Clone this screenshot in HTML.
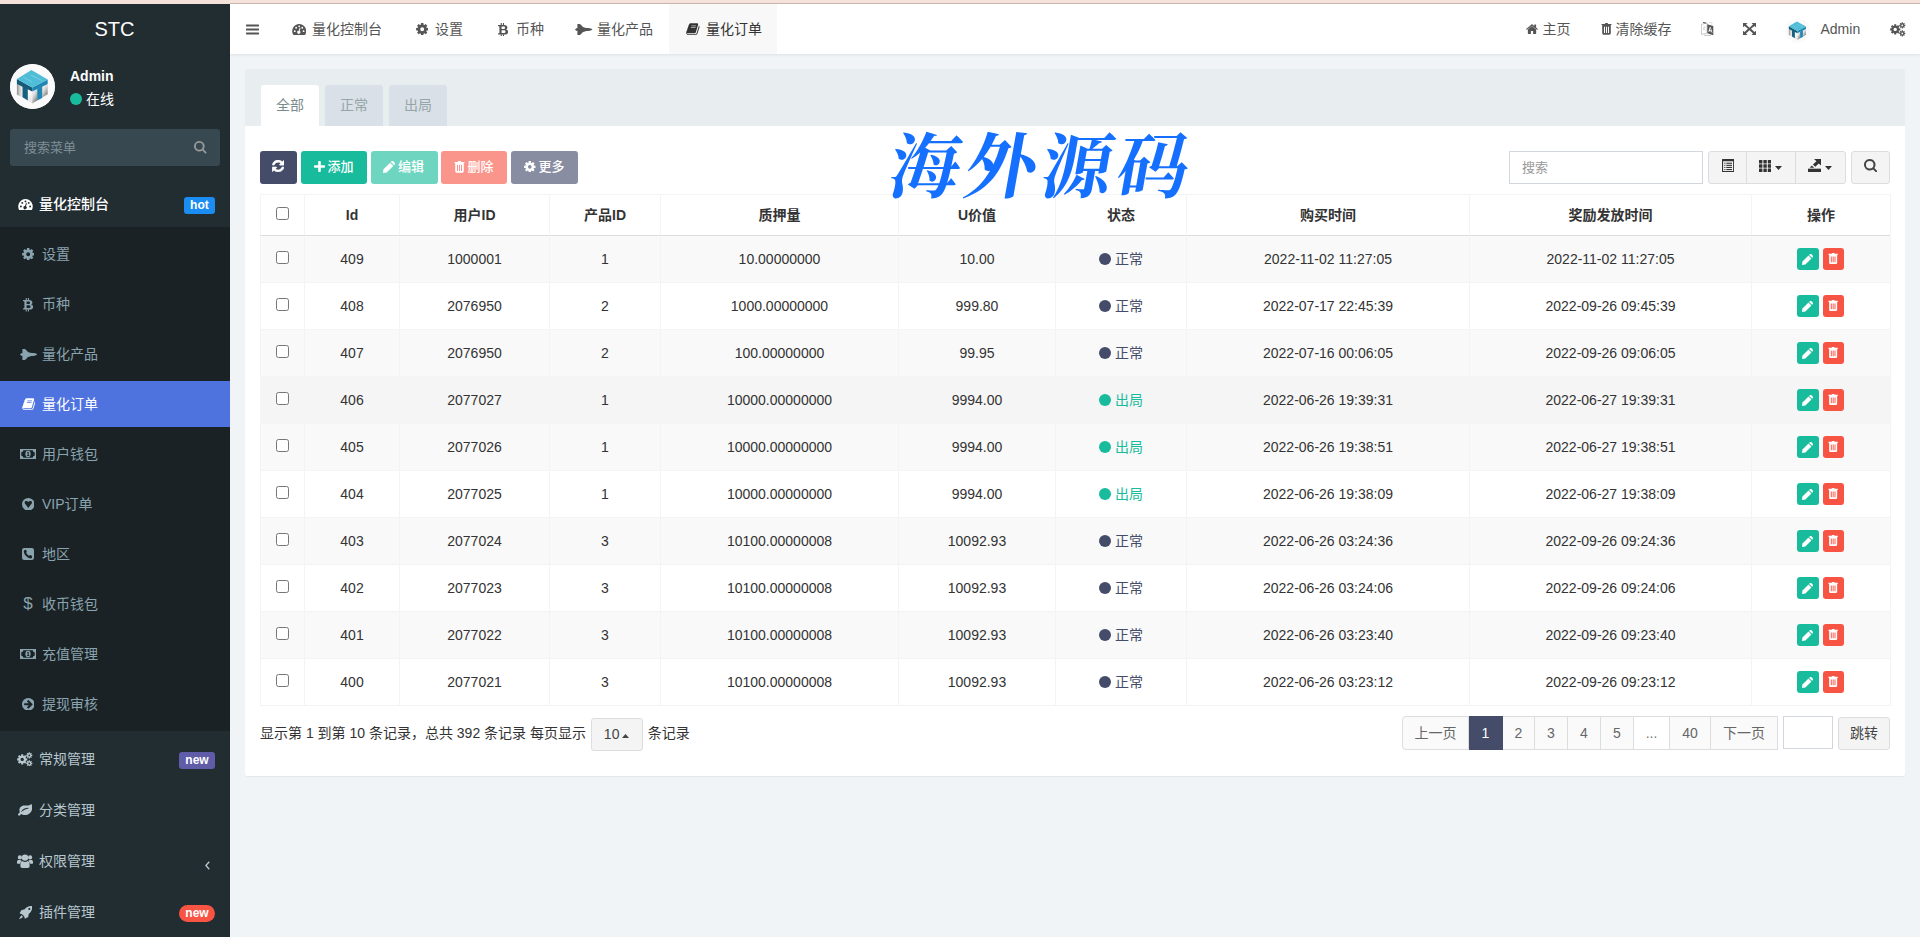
<!DOCTYPE html>
<html lang="zh-CN">
<head>
<meta charset="utf-8">
<title>STC</title>
<style>
*{box-sizing:border-box;}
html,body{margin:0;padding:0;}
body{width:1920px;height:937px;overflow:hidden;background:#f1f4f6;font-family:"Liberation Sans","Noto Sans CJK SC",sans-serif;font-size:14px;color:#444;position:relative;line-height:1.42857;}
svg{display:block;}
#strip{position:absolute;left:0;top:0;width:1920px;height:4px;background:#f5e2db;}
#strip i{position:absolute;left:230px;top:3px;width:1690px;height:1px;background:#cbb8b2;}
/* sidebar */
#side{position:absolute;left:0;top:4px;width:230px;height:933px;background:#222d32;}
#logo{position:absolute;left:0;top:0;width:229px;height:50px;line-height:50px;text-align:center;color:#fff;font-size:20px;}
#avatar{position:absolute;left:10px;top:60px;width:45px;height:45px;border-radius:50%;background:#fff;overflow:hidden;}
#uname{position:absolute;left:70px;top:62px;color:#fff;font-weight:bold;font-size:14px;line-height:20px;}
#ustat{position:absolute;left:70px;top:85px;color:#fff;font-size:14px;line-height:20px;white-space:nowrap;}
#ustat i{display:inline-block;width:12px;height:12px;border-radius:50%;background:#18bc9c;vertical-align:-1px;margin-right:4px;}
#msearch{position:absolute;left:10px;top:125px;width:210px;height:37px;border-radius:3px;background:#374850;color:#7f8e95;font-size:13px;line-height:37px;padding-left:14px;}
.m1{position:absolute;left:0;width:230px;height:46px;color:#b8c7ce;font-size:14px;line-height:46px;}
.m1 .t{position:absolute;left:39px;top:0;white-space:nowrap;}
.m1 svg{position:absolute;}
.m1.on{color:#fff;font-weight:500;}
.badge{position:absolute;right:15px;top:16px;height:17px;line-height:17px;padding:0 6.300px;border-radius:3px;color:#fff;font-size:12px;font-weight:bold;}
#sub{position:absolute;left:0;top:223px;width:230px;height:504px;background:#1a2226;}
.m2{position:absolute;left:0;width:230px;height:46px;color:#8aa4af;font-size:14px;line-height:46px;}
.m2 .t{position:absolute;left:42px;top:0;white-space:nowrap;}
.m2 svg{position:absolute;}
.m2 .dl{position:absolute;left:23.300px;top:0;font-size:17px;}
.m2.on{background:#4e73df;color:#fff;}
/* header */
#head{position:absolute;left:230px;top:4px;width:1690px;height:50px;background:#fff;box-shadow:0 1px 3px rgba(0,0,0,.08);}
.tab{position:absolute;top:0;height:50px;line-height:50px;color:#555;font-size:14px;white-space:nowrap;}
.tab svg{position:absolute;}
.tab .t{position:absolute;top:0;}
.tab.on{background:#f8f8f8;color:#333;}
.hr{position:absolute;top:0;height:50px;line-height:50px;color:#555;font-size:14px;white-space:nowrap;}
.hr svg{position:absolute;}
.hr .t{position:absolute;top:0;}
/* panel */
#panel{position:absolute;left:245px;top:69px;width:1660px;height:707px;background:#fff;border-radius:2px;box-shadow:0 1px 1px rgba(0,0,0,.05);}
#phead{position:absolute;left:0;top:0;width:1660px;height:57px;background:#e8edf0;border-radius:2px 2px 0 0;}
.ptab{position:absolute;top:16px;width:58px;height:41px;line-height:41px;text-align:center;font-size:14px;color:#95a5a6;background:#dae0e8;border-radius:3px 3px 0 0;}
.ptab.on{background:#fff;color:#7b8a8b;}
.btn{position:absolute;top:82px;height:33px;border-radius:3px;color:#fff;font-size:13px;line-height:33px;white-space:nowrap;}
.btn svg{position:absolute;}
.btn .t{position:absolute;top:-1px;font-weight:500;}
#wm{position:absolute;left:645px;top:54px;width:310px;height:90px;line-height:90px;font-family:"Liberation Serif","Noto Serif CJK SC",serif;font-weight:700;font-size:71px;color:#1570ff;white-space:nowrap;transform:skewX(-10deg);letter-spacing:5px;z-index:5;}
#sinput{position:absolute;left:1264px;top:82px;width:194px;height:33px;border:1px solid #d2d6de;background:#fff;color:#999;font-size:13px;line-height:31px;padding-left:12px;}
#bgrp{position:absolute;left:1463px;top:82px;width:138px;height:33px;}
.gb{position:absolute;top:0;height:33px;border:1px solid #ddd;background:#f4f4f4;color:#333;}
.gb:first-child{border-radius:3px 0 0 3px;}
.gb:last-child{border-radius:0 3px 3px 0;}
.gb svg{position:absolute;}
#sbtn{position:absolute;left:1606px;top:82px;width:39px;height:33px;border:1px solid #ddd;background:#f4f4f4;border-radius:3px;}
/* table */
#tb{position:absolute;left:15px;top:125px;width:1630px;table-layout:fixed;border-collapse:separate;border-spacing:0;font-size:14px;color:#333;border-right:1px solid #f4f4f4;}
#tb th,#tb td{text-align:center;padding:0;border-left:1px solid #f4f4f4;white-space:nowrap;overflow:hidden;}
#tb th{height:42px;border-top:1px solid #f4f4f4;border-bottom:1px solid #ddd;font-weight:bold;line-height:40px;}
#tb td{height:47px;border-bottom:1px solid #f4f4f4;line-height:46px;}
#tb tr.odd td{background:#f9f9f9;}
#tb tr.hov td{background:#f5f5f5;}
.cb{display:inline-block;width:13px;height:13px;border:1px solid #767676;border-radius:2.500px;background:#fff;vertical-align:middle;position:relative;top:-3px;}
.st i{display:inline-block;width:12px;height:12px;border-radius:50%;vertical-align:-1px;margin-right:4px;}
.s0{color:#444c69}.s0 i{background:#444c69}
.s1{color:#18bc9c}.s1 i{background:#18bc9c}
.ob{display:inline-block;width:22px;height:22px;border-radius:3px;vertical-align:middle;position:relative;top:-1px;left:-.7px;color:#fff;}
.ob.e{background:#18bc9c;margin-right:4px;}
.ob.d{background:#f75444;width:21px;}
/* footer */
#pinfo{position:absolute;left:15px;top:648px;height:33px;line-height:33px;font-size:14px;color:#333;white-space:nowrap;}
#psel{display:inline-block;position:relative;top:1px;width:52px;height:33px;border:1px solid #ddd;background:#f4f4f4;border-radius:3px;vertical-align:top;text-align:left;padding-left:12px;line-height:31px;color:#444;margin:0 1px;}
#pager{position:absolute;left:0;top:647px;width:1660px;height:34px;}
.pg{position:absolute;top:0;height:34px;border:1px solid #ddd;border-left:none;background:#fafafa;color:#666;font-size:14px;line-height:32px;text-align:center;}
.pg.first{border-left:1px solid #ddd;border-radius:4px 0 0 4px;}
.pg.last{border-radius:0 1px 1px 0;}
.pg.on{background:#444c69;border-color:#444c69;color:#fff;}
.pg.dis{background:#fff;color:#777;}
#jin{position:absolute;left:1538px;top:0;width:50px;height:33px;border:1px solid #d2d6de;background:#fff;}
#jbtn{position:absolute;left:1593px;top:1px;width:52px;height:33px;border:1px solid #ddd;background:#f4f4f4;border-radius:3px;color:#444;font-size:14px;line-height:31px;text-align:center;}

</style>
</head>
<body>
<div id="strip"><i></i></div>

<div id="side">
  <div id="logo">STC</div>
  <div id="avatar"><svg width="45" height="45" viewBox="0 0 45 45" fill="none" style=""><linearGradient id="ga1" x1="0" y1="0" x2="1" y2="0"><stop offset="0" stop-color="#8f8f8f"/><stop offset=".45" stop-color="#c9c9c9"/><stop offset="1" stop-color="#f4f4f4"/></linearGradient><linearGradient id="gb1" x1="0" y1="0" x2=".6" y2="1"><stop offset="0" stop-color="#ffffff"/><stop offset=".5" stop-color="#d8d8d8"/><stop offset="1" stop-color="#808080"/></linearGradient><linearGradient id="gc1" x1="0" y1="0" x2="0" y2="1"><stop offset="0" stop-color="#ffffff"/><stop offset="1" stop-color="#e2e2e2"/></linearGradient><circle cx="22.500" cy="22.500" r="22.500" fill="#fafafa"/><path d="M6.900 19.700 12.500 22.500V33.300L6.900 30.800Z" fill="url(#ga1)"/><path d="M17.800 25.300 22.200 27.200V39.400L17.800 36.400Z" fill="url(#gc1)"/><path d="M22.200 27.200 27.200 25V36.600L22.200 39.400Z" fill="url(#gb1)"/><path d="M32.200 22.200 37.700 19.700V30.300L32.200 33.600Z" fill="url(#gb1)"/><path d="M12.500 21.400 17.800 24.100V36.400L12.500 33.300Z" fill="#17607f"/><path d="M27.200 24.700 32.200 22.200V34.100L27.200 36.600Z" fill="#2186b4"/><path d="M6.900 15 22.200 23.600V27.400L6.900 19.900Z" fill="#165a78"/><path d="M22.200 23.600 37.700 15.500V19.900L22.200 27.400Z" fill="#1f86b3"/><path d="M21.400 6.100 37.700 15.500 22.200 23.600 6.900 15Z" fill="#4fbdd7"/><path d="M13.500 13 22.400 17.700 22 18.300 13.100 13.600Z M21.300 10.800 32.500 16.400 32.100 17 20.900 11.400Z" fill="#8fd9e0" opacity=".8"/></svg></div>
  <div id="uname">Admin</div>
  <div id="ustat"><i></i>在线</div>
  <div id="msearch">搜索菜单<svg width="12.5" height="12.5" viewBox="0 0 13 13" fill="currentColor" style="position:absolute;left:184px;top:12px;color:#999"><path fill-rule="evenodd" d="M5.500 0A5.500 5.500 0 0 1 10 8.700L12.700 11.400c.4.400.4 1 0 1.300-.4.400-1 .4-1.300 0L8.700 10A5.500 5.500 0 1 1 5.500 0Z M5.500 1.900A3.600 3.600 0 1 0 5.500 9.100A3.600 3.600 0 1 0 5.500 1.900Z"/></svg></div>
  <div class="m1 on" style="top:177px"><svg width="15" height="11.4" viewBox="0 0 15 11.4" fill="currentColor" style="left:17.5px;top:17.5px"><path fill-rule="evenodd" d="M7.5 0A7.5 7.5 0 0 0 1.1 11.0q.2.4.7.4h11.4q.5 0 .7-.4A7.5 7.5 0 0 0 7.5 0Z M1.95 7.5 a0.95 0.95 0 1 0 1.9 0 a0.95 0.95 0 1 0 -1.9 0Z M3.3499999999999996 3.9 a0.95 0.95 0 1 0 1.9 0 a0.95 0.95 0 1 0 -1.9 0Z M6.55 2.4 a0.95 0.95 0 1 0 1.9 0 a0.95 0.95 0 1 0 -1.9 0Z M9.75 3.9 a0.95 0.95 0 1 0 1.9 0 a0.95 0.95 0 1 0 -1.9 0Z M11.15 7.5 a0.95 0.95 0 1 0 1.9 0 a0.95 0.95 0 1 0 -1.9 0Z M7.0 7.0 L8.0 3.9 L8.9 4.2 L8.0 7.3 A1.6 1.6 0 1 1 7.0 7.0Z"/></svg><span class="t">量化控制台</span><span class="badge" style="background:#1a8cf2">hot</span></div>
  <div id="sub">
    <div class="m2" style="top:4px"><svg width="12.4" height="12.4" viewBox="0 0 12 12" fill="currentColor" style="left:21.6px;top:17px"><path fill-rule="evenodd" d="M10.31 4.71 L11.88 4.83 L11.88 7.17 L10.31 7.29 L9.96 8.14 L10.99 9.33 L9.33 10.99 L8.14 9.96 L7.29 10.31 L7.17 11.88 L4.83 11.88 L4.71 10.31 L3.86 9.96 L2.67 10.99 L1.01 9.33 L2.04 8.14 L1.69 7.29 L0.12 7.17 L0.12 4.83 L1.69 4.71 L2.04 3.86 L1.01 2.67 L2.67 1.01 L3.86 2.04 L4.71 1.69 L4.83 0.12 L7.17 0.12 L7.29 1.69 L8.14 2.04 L9.33 1.01 L10.99 2.67 L9.96 3.86Z M4.10 6.00 a1.9 1.9 0 1 0 3.8 0 a1.9 1.9 0 1 0 -3.8 0Z"/></svg><span class="t">设置</span></div>
    <div class="m2" style="top:54px"><svg width="10.3" height="13.5" viewBox="0 0 10.300 13.500" fill="currentColor" style="left:22.800px;top:17px"><path fill-rule="evenodd" d="M0 2h6.200c2 0 3.200.9 3.200 2.400 0 1-.5 1.700-1.400 2.100 1.300.3 2.100 1.200 2.100 2.400 0 1.700-1.300 2.600-3.500 2.600H0v-1.100l1.400-.3V3.400L0 3.100Z M3.600 3.400v2.600h1.900c1 0 1.500-.450 1.500-1.300s-.5-1.300-1.500-1.300Z M3.600 7.300v2.800h2.200c1.100 0 1.700-.5 1.700-1.400s-.6-1.400-1.700-1.400Z"/><rect x="2.700" y="0" width="1.100" height="2.300"/><rect x="4.900" y="0" width="1.100" height="2.300"/><rect x="2.700" y="11.200" width="1.100" height="2.300"/><rect x="4.900" y="11.200" width="1.100" height="2.300"/></svg><span class="t">币种</span></div>
    <div class="m2" style="top:104px"><svg width="17.5" height="11" viewBox="0 0 17.500 11" fill="currentColor" style="left:19.500px;top:18px"><path d="M0 5.500 1.200 4.300H2.400V.300C2.400.1 2.600 0 2.800 0H4.600C5 0 5.300.2 5.600.5L8 3C9.500 3.700 11 4 13.500 4.100 15 4.200 16.500 4.700 17.500 5.500 16.500 6.300 15 6.800 13.500 6.900 11 7 9.500 7.300 8 8L5.600 10.500C5.300 10.800 5 11 4.600 11H2.800C2.600 11 2.400 10.900 2.400 10.700V6.700H1.200Z"/></svg><span class="t">量化产品</span></div>
    <div class="m2 on" style="top:154px"><svg width="13.5" height="12" viewBox="0 0 13.5 12" fill="currentColor" style="left:21.5px;top:17px"><path d="M13.3 2.900c.3.400.3.900.2 1.400L11.400 10.700c-.2.700-.9 1.200-1.600 1.200H2.300c-.8 0-1.700-.6-2-1.500-.1-.4-.1-.700 0-1 0-.2.100-.4.100-.6 0-.15-.1-.25-.05-.4.050-.25.300-.450.450-.750.300-.5.600-1.300.650-1.800 0-.2-.1-.35 0-.5.050-.2.300-.4.400-.650C2.100 4.100 2.400 3.200 2.500 2.700c0-.2-.1-.4 0-.5.100-.250.350-.350.500-.550C3.300 1.200 3.700.2 4.400.300l0 0c.2-.050.350-.050.550-.050H11c.4 0 .750.150.950.450.200.250.250.600.150 1L10 8.700c-.4 1.200-.6 1.500-1.600 1.500H1.500c-.1 0-.25.050-.3.100-.050.1-.050.2 0 .4.200.5.700.6 1.100.6H9.700c.3 0 .6-.2.700-.450L12.800 3.200c.050-.150.050-.3.050-.450.200.050.350.1.450.150Z"/><path d="M5.300 3.300h4.600l.25-.8H5.550Z M4.800 5h4.600l.25-.8H5.050Z" fill="#4e73df"/></svg><span class="t">量化订单</span></div>
    <div class="m2" style="top:204px"><svg width="16" height="10" viewBox="0 0 16 10" fill="currentColor" style="left:20px;top:17.800px"><path fill-rule="evenodd" d="M0 0H16V10H0Z M3.300 1.300H12.700A2.100 2.100 0 0 0 14.700 3.300V6.700A2.100 2.100 0 0 0 12.700 8.700H3.300A2.100 2.100 0 0 0 1.300 6.700V3.300A2.100 2.100 0 0 0 3.300 1.300Z"/><path fill-rule="evenodd" d="M5.400 5a2.600 3.200 0 1 0 5.200 0a2.600 3.200 0 1 0-5.200 0Z M7 3.600 7.900 2.900h.8v3.400h.8v.8H6.800v-.8h.9V4.100l-.6.400Z"/></svg><span class="t">用户钱包</span></div>
    <div class="m2" style="top:254px"><svg width="12.6" height="12.6" viewBox="0 0 12.600 12.600" fill="currentColor" style="left:21.7px;top:16.7px"><path fill-rule="evenodd" d="M6.300 0a6.300 6.300 0 1 0 0 12.600a6.300 6.300 0 1 0 0-12.600Z M6.300 10 2.900 5.400c-.8-1.200.1-2.500 1.300-2.500.9 0 1.600.6 2.100 1.100.5-.5 1.200-1.100 2.100-1.100 1.200 0 2.100 1.300 1.300 2.500Z"/></svg><span class="t">VIP订单</span></div>
    <div class="m2" style="top:304px"><svg width="12" height="12" viewBox="0 0 12 12" fill="currentColor" style="left:22px;top:17px"><path fill-rule="evenodd" d="M2.200 0H9.800A2.200 2.200 0 0 1 12 2.200V9.800A2.200 2.200 0 0 1 9.800 12H2.200A2.200 2.200 0 0 1 0 9.800V2.200A2.200 2.200 0 0 1 2.200 0Z M10 8.300c0-.1 0-.2-.050-.3-.050-.150-1.300-.8-1.500-.9-.150-.1-.3-.2-.450-.2-.3 0-.7.8-1 .8-.150 0-.3-.1-.450-.2C5.700 7 4.900 6.200 4.400 5.300c-.1-.150-.2-.3-.2-.450 0-.3.8-.7.8-1 0-.150-.1-.3-.2-.450-.1-.2-.750-1.450-.9-1.500C3.800 1.850 3.700 1.850 3.600 1.850c-.3 0-.9.150-1.200.3-.4.200-.65.900-.65 1.350 0 .6.250 1.150.450 1.700.700 1.950 2.800 4.050 4.750 4.750.550.200 1.100.450 1.700.450.450 0 1.150-.250 1.350-.650C10.150 9.450 10 8.600 10 8.300Z"/></svg><span class="t">地区</span></div>
    <div class="m2" style="top:354px"><span class="dl">$</span><span class="t">收币钱包</span></div>
    <div class="m2" style="top:404px"><svg width="16" height="10" viewBox="0 0 16 10" fill="currentColor" style="left:20px;top:17.800px"><path fill-rule="evenodd" d="M0 0H16V10H0Z M3.300 1.300H12.700A2.100 2.100 0 0 0 14.700 3.300V6.700A2.100 2.100 0 0 0 12.700 8.700H3.300A2.100 2.100 0 0 0 1.300 6.700V3.300A2.100 2.100 0 0 0 3.300 1.300Z"/><path fill-rule="evenodd" d="M5.400 5a2.600 3.200 0 1 0 5.200 0a2.600 3.200 0 1 0-5.200 0Z M7 3.600 7.900 2.900h.8v3.400h.8v.8H6.800v-.8h.9V4.100l-.6.400Z"/></svg><span class="t">充值管理</span></div>
    <div class="m2" style="top:454px"><svg width="12.6" height="12.6" viewBox="0 0 12.600 12.600" fill="currentColor" style="left:21.7px;top:16.7px"><path fill-rule="evenodd" d="M6.300 0a6.300 6.300 0 1 0 0 12.600a6.300 6.300 0 1 0 0-12.600Z M10.600 6.300c0 .15-.05.3-.15.4L6.700 10.400c-.2.200-.5.200-.750 0l-.75-.750c-.2-.2-.2-.5 0-.750L6.800 7.300H2.600c-.3 0-.5-.25-.5-.5v-1c0-.3.250-.5.5-.5H6.800L5.200 3.700c-.2-.2-.2-.5 0-.750l.75-.750c.2-.2.5-.2.750 0L10.450 5.900c.1.100.15.250.15.400Z"/></svg><span class="t">提现审核</span></div>
  </div>
  <div class="m1" style="top:732px"><svg width="15.5" height="14.6" viewBox="0 0 15.5 14.6" fill="currentColor" style="left:17px;top:15.600px"><path fill-rule="evenodd" d="M8.94 6.28 L10.30 6.39 L10.30 8.41 L8.94 8.52 L8.63 9.25 L9.52 10.29 L8.09 11.72 L7.05 10.83 L6.32 11.14 L6.21 12.50 L4.19 12.50 L4.08 11.14 L3.35 10.83 L2.31 11.72 L0.88 10.29 L1.77 9.25 L1.46 8.52 L0.10 8.41 L0.10 6.39 L1.46 6.28 L1.77 5.55 L0.88 4.51 L2.31 3.08 L3.35 3.97 L4.08 3.66 L4.19 2.30 L6.21 2.30 L6.32 3.66 L7.05 3.97 L8.09 3.08 L9.52 4.51 L8.63 5.55Z M3.50 7.40 a1.7 1.7 0 1 0 3.4 0 a1.7 1.7 0 1 0 -3.4 0Z M14.41 2.77 L15.34 2.80 L15.34 4.00 L14.41 4.03 L14.24 4.44 L14.88 5.12 L14.02 5.98 L13.34 5.34 L12.93 5.51 L12.90 6.44 L11.70 6.44 L11.67 5.51 L11.26 5.34 L10.58 5.98 L9.72 5.12 L10.36 4.44 L10.19 4.03 L9.26 4.00 L9.26 2.80 L10.19 2.77 L10.36 2.36 L9.72 1.68 L10.58 0.82 L11.26 1.46 L11.67 1.29 L11.70 0.36 L12.90 0.36 L12.93 1.29 L13.34 1.46 L14.02 0.82 L14.88 1.68 L14.24 2.36Z M11.40 3.40 a0.9 0.9 0 1 0 1.8 0 a0.9 0.9 0 1 0 -1.8 0Z M14.41 10.77 L15.34 10.80 L15.34 12.00 L14.41 12.03 L14.24 12.44 L14.88 13.12 L14.02 13.98 L13.34 13.34 L12.93 13.51 L12.90 14.44 L11.70 14.44 L11.67 13.51 L11.26 13.34 L10.58 13.98 L9.72 13.12 L10.36 12.44 L10.19 12.03 L9.26 12.00 L9.26 10.80 L10.19 10.77 L10.36 10.36 L9.72 9.68 L10.58 8.82 L11.26 9.46 L11.67 9.29 L11.70 8.36 L12.90 8.36 L12.93 9.29 L13.34 9.46 L14.02 8.82 L14.88 9.68 L14.24 10.36Z M11.40 11.40 a0.9 0.9 0 1 0 1.8 0 a0.9 0.9 0 1 0 -1.8 0Z"/></svg><span class="t">常规管理</span><span class="badge" style="background:#605ca8">new</span></div>
  <div class="m1" style="top:783px"><svg width="15.3" height="11.7" viewBox="0 0 15.300 11.700" fill="currentColor" style="left:17px;top:17px"><path fill-rule="evenodd" d="M14.500 0c.5 1.200.7 2.500.7 3.700 0 4.300-3.300 7.300-7.400 7.300-1.400 0-2.500-.5-3.600-1.100-.6.500-1.300 1.800-2.100 1.800-.7 0-1.100-.6-1.100-1.100 0-.9 1.400-1.800 1.900-2.400C2.600 7.600 2.400 6.900 2.400 6.100c0-3 2.500-4.500 5.100-4.600 1.700-.1 4.900.2 6.100-1 .3-.3.500-.5.900-.5Z M11 3.700c-2 0-5.200.9-6.900 3.700-.15.250.1.550.4.400C6.500 6.200 8.800 4.800 11 4.700c.3 0 .5-.2.500-.5s-.2-.5-.5-.5Z"/></svg><span class="t">分类管理</span></div>
  <div class="m1" style="top:834px"><svg width="16" height="14" viewBox="0 0 16 14" fill="currentColor" style="left:17.200px;top:15.500px"><circle cx="2.900" cy="3.400" r="2.100"/><circle cx="13.100" cy="3.400" r="2.100"/><path d="M4.700 6.700C4 6.100 3.500 5.900 2.800 5.900H1.600C.5 5.900 0 6.700 0 8V9.300c0 .3.200.5.500.5H3.100C3.200 8.600 3.800 7.500 4.700 6.700Z"/><path d="M11.300 6.700C12 6.100 12.500 5.900 13.200 5.900h1.200C15.500 5.900 16 6.700 16 8V9.300c0 .3-.2.500-.5.500H12.900C12.800 8.600 12.200 7.500 11.300 6.700Z"/><circle cx="8" cy="3.600" r="3.200"/><path d="M10.700 7c-.7.600-1.700 1-2.700 1S6 7.600 5.300 7C3.900 7.300 3.400 8.800 3.400 10.500v1.800c0 1 .8 1.700 1.800 1.700h5.600c1 0 1.800-.7 1.800-1.700V10.500c0-1.700-.5-3.200-1.900-3.500Z"/></svg><span class="t">权限管理</span><svg width="5" height="9" viewBox="0 0 5 9" fill="currentColor" style="left:205px;top:23px"><path d="M4.200.7.900 4.500 4.200 8.300" fill="none" stroke="currentColor" stroke-width="1.300"/></svg></div>
  <div class="m1" style="top:885px"><svg width="13.4" height="13.4" viewBox="0 0 13.400 13.400" fill="currentColor" style="left:18.800px;top:16.500px"><path fill-rule="evenodd" d="M13 0c.2 0 .3.100.3.300.1 3.300-1 5.700-3.600 7.600-.1.900-.250 1.900-.4 2.800 0 .1-.1.200-.2.250L6.400 12.600c-.2.100-.4 0-.5-.2L5.100 10.300 3 8.200.900 7.400c-.2-.1-.3-.3-.2-.5L2.350 4.200c.050-.1.150-.2.250-.2.900-.150 1.900-.3 2.800-.4C7.300 1 9.700-.1 13 0Z M10.300 1.900a1.100 1.100 0 1 0 0 2.200a1.100 1.100 0 1 0 0-2.200Z "/><path d="M2.400 9.200c.5.500 1.100 1.100 1.700 1.700-.9.900-2.400 1.700-4.100 2.400C.7 11.600 1.500 10.100 2.400 9.200Z"/></svg><span class="t">插件管理</span><span class="badge" style="background:#f75444;border-radius:9px">new</span></div>
</div>


<div id="head">
  <svg width="13" height="11" viewBox="0 0 13 11" fill="currentColor" style="position:absolute;left:16px;top:19.5px;color:#555"><rect x="0" y="0.5" width="13" height="2" rx=".4"/><rect x="0" y="4.5" width="13" height="2" rx=".4"/><rect x="0" y="8.5" width="13" height="2" rx=".4"/></svg>
  <div class="tab" style="left:45px;width:122px"><svg width="14.4" height="10.94" viewBox="0 0 15 11.4" fill="currentColor" style="left:16.600px;top:20px"><path fill-rule="evenodd" d="M7.5 0A7.5 7.5 0 0 0 1.1 11.0q.2.4.7.4h11.4q.5 0 .7-.4A7.5 7.5 0 0 0 7.5 0Z M1.95 7.5 a0.95 0.95 0 1 0 1.9 0 a0.95 0.95 0 1 0 -1.9 0Z M3.3499999999999996 3.9 a0.95 0.95 0 1 0 1.9 0 a0.95 0.95 0 1 0 -1.9 0Z M6.55 2.4 a0.95 0.95 0 1 0 1.9 0 a0.95 0.95 0 1 0 -1.9 0Z M9.75 3.9 a0.95 0.95 0 1 0 1.9 0 a0.95 0.95 0 1 0 -1.9 0Z M11.15 7.5 a0.95 0.95 0 1 0 1.9 0 a0.95 0.95 0 1 0 -1.9 0Z M7.0 7.0 L8.0 3.9 L8.9 4.2 L8.0 7.3 A1.6 1.6 0 1 1 7.0 7.0Z"/></svg><span class="t" style="left:37px">量化控制台</span></div>
  <div class="tab" style="left:168px;width:80px"><svg width="12.4" height="12.4" viewBox="0 0 12 12" fill="currentColor" style="left:17.6px;top:19px"><path fill-rule="evenodd" d="M10.31 4.71 L11.88 4.83 L11.88 7.17 L10.31 7.29 L9.96 8.14 L10.99 9.33 L9.33 10.99 L8.14 9.96 L7.29 10.31 L7.17 11.88 L4.83 11.88 L4.71 10.31 L3.86 9.96 L2.67 10.99 L1.01 9.33 L2.04 8.14 L1.69 7.29 L0.12 7.17 L0.12 4.83 L1.69 4.71 L2.04 3.86 L1.01 2.67 L2.67 1.01 L3.86 2.04 L4.71 1.69 L4.83 0.12 L7.17 0.12 L7.29 1.69 L8.14 2.04 L9.33 1.01 L10.99 2.67 L9.96 3.86Z M4.10 6.00 a1.9 1.9 0 1 0 3.8 0 a1.9 1.9 0 1 0 -3.8 0Z"/></svg><span class="t" style="left:37px">设置</span></div>
  <div class="tab" style="left:249px;width:80px"><svg width="10.3" height="13.5" viewBox="0 0 10.300 13.500" fill="currentColor" style="left:19px;top:18.500px"><path fill-rule="evenodd" d="M0 2h6.200c2 0 3.200.9 3.200 2.400 0 1-.5 1.700-1.400 2.100 1.300.3 2.100 1.200 2.100 2.400 0 1.700-1.300 2.600-3.500 2.600H0v-1.100l1.400-.3V3.400L0 3.100Z M3.600 3.400v2.600h1.900c1 0 1.500-.450 1.500-1.300s-.5-1.300-1.500-1.300Z M3.600 7.300v2.800h2.200c1.100 0 1.700-.5 1.700-1.400s-.6-1.400-1.700-1.400Z"/><rect x="2.700" y="0" width="1.100" height="2.300"/><rect x="4.900" y="0" width="1.100" height="2.300"/><rect x="2.700" y="11.200" width="1.100" height="2.300"/><rect x="4.900" y="11.200" width="1.100" height="2.300"/></svg><span class="t" style="left:37px">币种</span></div>
  <div class="tab" style="left:330px;width:108px"><svg width="17.5" height="11" viewBox="0 0 17.500 11" fill="currentColor" style="left:15px;top:20px"><path d="M0 5.500 1.200 4.300H2.400V.300C2.400.1 2.600 0 2.800 0H4.600C5 0 5.300.2 5.600.5L8 3C9.500 3.700 11 4 13.500 4.100 15 4.200 16.500 4.700 17.500 5.500 16.500 6.300 15 6.800 13.500 6.900 11 7 9.500 7.300 8 8L5.600 10.500C5.300 10.800 5 11 4.600 11H2.800C2.600 11 2.400 10.900 2.400 10.700V6.700H1.200Z"/></svg><span class="t" style="left:37px">量化产品</span></div>
  <div class="tab on" style="left:439px;width:108px"><svg width="13.5" height="12" viewBox="0 0 13.5 12" fill="currentColor" style="left:17px;top:19px"><path d="M13.3 2.900c.3.400.3.900.2 1.400L11.400 10.700c-.2.700-.9 1.200-1.600 1.200H2.300c-.8 0-1.700-.6-2-1.500-.1-.4-.1-.700 0-1 0-.2.100-.4.100-.6 0-.15-.1-.25-.05-.4.050-.25.300-.450.450-.750.300-.5.600-1.300.650-1.800 0-.2-.1-.35 0-.5.050-.2.300-.4.400-.650C2.100 4.100 2.400 3.200 2.500 2.700c0-.2-.1-.4 0-.5.100-.250.350-.350.500-.550C3.300 1.200 3.700.2 4.400.300l0 0c.2-.050.350-.050.550-.050H11c.4 0 .750.150.950.450.200.250.250.600.150 1L10 8.700c-.4 1.200-.6 1.500-1.600 1.500H1.500c-.1 0-.25.050-.3.100-.050.1-.050.2 0 .4.200.5.700.6 1.100.6H9.700c.3 0 .6-.2.700-.450L12.800 3.200c.050-.150.050-.3.050-.450.200.050.350.1.450.150Z"/><path d="M5.300 3.300h4.600l.25-.8H5.550Z M4.800 5h4.600l.25-.8H5.050Z" fill="#c8c8c8"/></svg><span class="t" style="left:37px">量化订单</span></div>
  <div class="hr" style="left:1296px"><svg width="12" height="10.15" viewBox="0 0 13 11" fill="currentColor" style="left:0;top:19.500px"><path d="M6.500 2.300 11 6v4.300c0 .3-.2.500-.5.500H7.700V7.700H5.300v3.100H2.500c-.3 0-.5-.2-.5-.5V6Z"/><path d="M12.800 5.700 12.300 6.300c-.1.100-.3.100-.4 0L6.500 1.800 1.100 6.300c-.1.100-.3.100-.4 0L.2 5.700c-.1-.1-.1-.3 0-.4L5.900.500c.3-.3.900-.3 1.200 0L9 2.100V.800c0-.150.1-.250.250-.250H10.700c.150 0 .250.1.250.250v2.900L12.800 5.300c.1.100.1.300 0 .4Z"/></svg><span class="t" style="left:16.500px">主页</span></div>
  <div class="hr" style="left:1371px"><svg width="11" height="12" viewBox="0 0 11 12" fill="currentColor" style="left:-.5px;top:18.800px"><path fill-rule="evenodd" d="M3.800 0.900 4.200.2C4.300.1 4.400 0 4.600 0H6.400c.2 0 .3.100.4.200l.4.700H10.200c.150 0 .3.100.3.300v.6c0 .2-.150.300-.3.300H9.800v8c0 1-.6 1.700-1.300 1.700H2.500c-.7 0-1.300-.7-1.300-1.700v-8H.8c-.150 0-.3-.1-.3-.300V1.200c0-.2.150-.300.3-.3Z M3 4v5.800c0 .150.1.250.250.250h.5c.150 0 .250-.1.250-.250V4c0-.150-.1-.250-.250-.250h-.5C3.100 3.750 3 3.850 3 4Z M5 4v5.800c0 .150.1.250.250.250h.5c.150 0 .250-.1.250-.250V4c0-.150-.1-.250-.250-.250h-.5C5.100 3.750 5 3.850 5 4Z M7 4v5.800c0 .150.1.250.250.250h.5C7.900 10.050 8 9.950 8 9.800V4c0-.150-.1-.250-.250-.250h-.5C7.100 3.750 7 3.850 7 4Z"/></svg><span class="t" style="left:14.500px">清除缓存</span></div>
  <div class="hr" style="left:1471px"><svg width="13" height="14" viewBox="0 0 13 14" fill="currentColor" style="left:0;top:18px"><path d="M.4 2.400 6 .8v10.500L.4 12.500Z" fill="none" stroke="#bbb" stroke-width=".8"/><path d="M2.200 5.300c.8.300 1.600.3 2.400-.2M3.400 4.200v1.200c-.2 1.300-.7 2.100-1.400 2.700M2.600 6.600c.5.700 1.200 1.300 2 1.600" fill="none" stroke="#ccc" stroke-width=".7"/><path d="M2 .3 5 1.300" stroke="#555" stroke-width="1.2"/><path fill-rule="evenodd" fill="#555" d="M6.300 2.300 12.300 3.900V13.200L6.300 11.300Z M8.800 4.900 7.400 9.700l.9.300.3-1.100 1.700.5.300 1.100.9.300L9.700 5.200Z M8.850 8l.6-2 .6 2.400Z"/><path d="M3.200 13.400H9.700L10.300 12.300" fill="none" stroke="#999" stroke-width=".6"/><path d="M8 .6 10.900.3V3.300" fill="none" stroke="#ccc" stroke-width=".6"/></svg></div>
  <div class="hr" style="left:1513px"><svg width="13" height="12" viewBox="0 0 13 12.500" preserveAspectRatio="none" fill="currentColor" style="left:0;top:19px"><path transform="scale(1 1)" d="M0 0H4.500L3 1.500 6.500 5 10 1.500 8.500 0H13V4.500L11.500 3 8 6 11.500 9.500 13 8v4.500H8.500L10 11 6.500 7.500 3 11 4.500 12.500H0V8L1.500 9.500 5 6 1.500 3 0 4.500Z"/></svg></div>
  <div class="hr" style="left:1555px"><span style="position:absolute;left:0;top:13.500px;width:25px;height:25px;border-radius:50%;overflow:hidden"><svg width="25" height="25" viewBox="0 0 45 45" fill="none" style=""><linearGradient id="ga2" x1="0" y1="0" x2="1" y2="0"><stop offset="0" stop-color="#8f8f8f"/><stop offset=".45" stop-color="#c9c9c9"/><stop offset="1" stop-color="#f4f4f4"/></linearGradient><linearGradient id="gb2" x1="0" y1="0" x2=".6" y2="1"><stop offset="0" stop-color="#ffffff"/><stop offset=".5" stop-color="#d8d8d8"/><stop offset="1" stop-color="#808080"/></linearGradient><linearGradient id="gc2" x1="0" y1="0" x2="0" y2="1"><stop offset="0" stop-color="#ffffff"/><stop offset="1" stop-color="#e2e2e2"/></linearGradient><circle cx="22.500" cy="22.500" r="22.500" fill="#fafafa"/><path d="M6.900 19.700 12.500 22.500V33.300L6.900 30.800Z" fill="url(#ga2)"/><path d="M17.800 25.300 22.200 27.200V39.400L17.800 36.400Z" fill="url(#gc2)"/><path d="M22.200 27.200 27.200 25V36.600L22.200 39.400Z" fill="url(#gb2)"/><path d="M32.200 22.200 37.700 19.700V30.300L32.200 33.600Z" fill="url(#gb2)"/><path d="M12.500 21.400 17.800 24.100V36.400L12.500 33.300Z" fill="#17607f"/><path d="M27.200 24.700 32.200 22.200V34.100L27.200 36.600Z" fill="#2186b4"/><path d="M6.900 15 22.200 23.600V27.400L6.900 19.900Z" fill="#165a78"/><path d="M22.200 23.600 37.700 15.500V19.900L22.200 27.400Z" fill="#1f86b3"/><path d="M21.400 6.100 37.700 15.500 22.200 23.600 6.900 15Z" fill="#4fbdd7"/><path d="M13.500 13 22.400 17.700 22 18.300 13.100 13.600Z M21.300 10.800 32.500 16.400 32.100 17 20.900 11.400Z" fill="#8fd9e0" opacity=".8"/></svg></span><span class="t" style="left:35.500px">Admin</span></div>
  <div class="hr" style="left:1660px"><svg width="15.5" height="14.6" viewBox="0 0 15.5 14.6" fill="currentColor" style="left:0;top:18px"><path fill-rule="evenodd" d="M8.94 6.28 L10.30 6.39 L10.30 8.41 L8.94 8.52 L8.63 9.25 L9.52 10.29 L8.09 11.72 L7.05 10.83 L6.32 11.14 L6.21 12.50 L4.19 12.50 L4.08 11.14 L3.35 10.83 L2.31 11.72 L0.88 10.29 L1.77 9.25 L1.46 8.52 L0.10 8.41 L0.10 6.39 L1.46 6.28 L1.77 5.55 L0.88 4.51 L2.31 3.08 L3.35 3.97 L4.08 3.66 L4.19 2.30 L6.21 2.30 L6.32 3.66 L7.05 3.97 L8.09 3.08 L9.52 4.51 L8.63 5.55Z M3.50 7.40 a1.7 1.7 0 1 0 3.4 0 a1.7 1.7 0 1 0 -3.4 0Z M14.41 2.77 L15.34 2.80 L15.34 4.00 L14.41 4.03 L14.24 4.44 L14.88 5.12 L14.02 5.98 L13.34 5.34 L12.93 5.51 L12.90 6.44 L11.70 6.44 L11.67 5.51 L11.26 5.34 L10.58 5.98 L9.72 5.12 L10.36 4.44 L10.19 4.03 L9.26 4.00 L9.26 2.80 L10.19 2.77 L10.36 2.36 L9.72 1.68 L10.58 0.82 L11.26 1.46 L11.67 1.29 L11.70 0.36 L12.90 0.36 L12.93 1.29 L13.34 1.46 L14.02 0.82 L14.88 1.68 L14.24 2.36Z M11.40 3.40 a0.9 0.9 0 1 0 1.8 0 a0.9 0.9 0 1 0 -1.8 0Z M14.41 10.77 L15.34 10.80 L15.34 12.00 L14.41 12.03 L14.24 12.44 L14.88 13.12 L14.02 13.98 L13.34 13.34 L12.93 13.51 L12.90 14.44 L11.70 14.44 L11.67 13.51 L11.26 13.34 L10.58 13.98 L9.72 13.12 L10.36 12.44 L10.19 12.03 L9.26 12.00 L9.26 10.80 L10.19 10.77 L10.36 10.36 L9.72 9.68 L10.58 8.82 L11.26 9.46 L11.67 9.29 L11.70 8.36 L12.90 8.36 L12.93 9.29 L13.34 9.46 L14.02 8.82 L14.88 9.68 L14.24 10.36Z M11.40 11.40 a0.9 0.9 0 1 0 1.8 0 a0.9 0.9 0 1 0 -1.8 0Z"/></svg></div>
</div>


<div id="panel">
  <div id="phead">
    <div class="ptab on" style="left:16px">全部</div>
    <div class="ptab" style="left:80px">正常</div>
    <div class="ptab" style="left:144px">出局</div>
  </div>
  <div class="btn" style="left:15px;width:37px;background:#444c69"><svg width="12.2" height="12.2" viewBox="0.2 0.2 11.800 11.800" fill="currentColor" style="left:12.300px;top:9.300px"><path stroke="currentColor" stroke-width=".5" stroke-linejoin="round" d="M11.800 7.200c0 0 0 .050 0 .1C11.200 10 9 11.800 6.200 11.800c-1.500 0-2.900-.6-4-1.600l-1 1c-.1.100-.2.150-.350.150-.3 0-.5-.2-.5-.5V7.400c0-.3.200-.5.500-.5H4.300c.3 0 .5.200.5.500 0 .150-.050.250-.150.350L3.600 8.800c.7.650 1.600 1 2.600 1 1.300 0 2.500-.7 3.200-1.800.2-.3.250-.550.4-.850.050-.1.100-.2.250-.2h1.500c.150 0 .250.100.250.250Z"/><path stroke="currentColor" stroke-width=".5" stroke-linejoin="round" d="M12 1.200V4.700c0 .3-.2.500-.5.500H8c-.3 0-.5-.2-.5-.5 0-.150.050-.250.150-.350L8.700 3.300C8 2.650 7.100 2.300 6.100 2.300c-1.300 0-2.500.7-3.200 1.800-.2.300-.250.550-.4.850-.050.100-.1.200-.250.200H.7c-.150 0-.250-.100-.250-.250v-.050C1.100 2.100 3.300.3 6.100.3c1.500 0 2.900.6 4 1.600l1-1C11.200.800 11.350.750 11.500.750c.3 0 .5.200.5.450Z"/></svg></div>
  <div class="btn" style="left:56px;width:66px;background:#18bc9c"><svg width="11" height="11" viewBox="0 0 11 11" fill="currentColor" style="left:13px;top:9.700px"><path d="M4.200.700c0-.4.300-.7.700-.7h1.200c.4 0 .7.300.7.700V4.200H10.300c.4 0 .7.300.7.700v1.200c0 .4-.3.700-.7.700H6.800V10.300c0 .4-.3.700-.7.700H4.900c-.4 0-.7-.3-.7-.7V6.800H.7C.3 6.800 0 6.500 0 6.100V4.900c0-.4.300-.7.700-.7H4.200Z"/></svg><span class="t" style="left:26.500px">添加</span></div>
  <div class="btn" style="left:126px;width:67px;background:#6ed5c1"><svg width="12" height="12" viewBox="0 0 12 12" fill="currentColor" style="left:12px;top:9.500px"><path d="M0 12 .5 8.300 7.100 1.700 10.300 4.900 3.700 11.500Z"/><path d="M7.800 1 8.700.1c.4-.4 1-.4 1.400 0l1.800 1.800c.4.4.4 1 0 1.400l-.9.900Z"/></svg><span class="t" style="left:27px">编辑</span></div>
  <div class="btn" style="left:196px;width:66px;background:#fa958b"><svg width="11" height="12" viewBox="0 0 11 12" fill="currentColor" style="left:12.500px;top:9.500px"><path fill-rule="evenodd" d="M3.800 0.900 4.200.2C4.300.1 4.400 0 4.600 0H6.400c.2 0 .3.100.4.200l.4.700H10.200c.150 0 .3.100.3.300v.6c0 .2-.150.300-.3.300H9.800v8c0 1-.6 1.700-1.300 1.700H2.500c-.7 0-1.300-.7-1.300-1.700v-8H.8c-.150 0-.3-.1-.3-.300V1.200c0-.2.150-.300.3-.3Z M3 4v5.800c0 .150.1.250.250.250h.5c.150 0 .250-.1.250-.250V4c0-.150-.1-.250-.250-.250h-.5C3.100 3.750 3 3.850 3 4Z M5 4v5.800c0 .150.1.250.250.250h.5c.150 0 .250-.1.250-.250V4c0-.150-.1-.250-.250-.250h-.5C5.100 3.750 5 3.850 5 4Z M7 4v5.800c0 .150.1.250.250.250h.5C7.900 10.050 8 9.950 8 9.800V4c0-.150-.1-.250-.250-.250h-.5C7.100 3.750 7 3.850 7 4Z"/></svg><span class="t" style="left:26.500px">删除</span></div>
  <div class="btn" style="left:266px;width:67px;background:#888da1"><svg width="11.6" height="11.6" viewBox="0 0 12 12" fill="currentColor" style="left:13px;top:9.800px"><path fill-rule="evenodd" d="M10.31 4.71 L11.88 4.83 L11.88 7.17 L10.31 7.29 L9.96 8.14 L10.99 9.33 L9.33 10.99 L8.14 9.96 L7.29 10.31 L7.17 11.88 L4.83 11.88 L4.71 10.31 L3.86 9.96 L2.67 10.99 L1.01 9.33 L2.04 8.14 L1.69 7.29 L0.12 7.17 L0.12 4.83 L1.69 4.71 L2.04 3.86 L1.01 2.67 L2.67 1.01 L3.86 2.04 L4.71 1.69 L4.83 0.12 L7.17 0.12 L7.29 1.69 L8.14 2.04 L9.33 1.01 L10.99 2.67 L9.96 3.86Z M4.10 6.00 a1.9 1.9 0 1 0 3.8 0 a1.9 1.9 0 1 0 -3.8 0Z"/></svg><span class="t" style="left:27.500px">更多</span></div>
  <div id="wm">海外源码</div>
  <div id="sinput">搜索</div>
  <div id="bgrp">
    <span class="gb" style="left:0;width:39px"><svg width="12.2" height="13" viewBox="0 0 12.200 13" fill="currentColor" style="left:13px;top:7px"><path fill-rule="evenodd" d="M.6 0H11.600c.3 0 .6.3.6.6V12.400c0 .3-.3.6-.6.6H.6C.3 13 0 12.700 0 12.400V.6C0 .3.300 0 .6 0Z M1.100 2.300V11.900H11.100V2.300Z"/><rect x="2.300" y="3.700" width="1.100" height="1.100"/><rect x="4.300" y="3.700" width="5.700" height="1.100"/><rect x="2.300" y="5.800" width="1.100" height="1.100"/><rect x="4.300" y="5.800" width="5.700" height="1.100"/><rect x="2.300" y="7.900" width="1.100" height="1.100"/><rect x="4.300" y="7.900" width="5.700" height="1.100"/><rect x="2.300" y="10" width="1.100" height="1.100"/><rect x="4.300" y="10" width="5.700" height="1.100"/></svg></span>
    <span class="gb" style="left:38px;width:50px"><svg width="12.2" height="12" viewBox="0 0 12.200 12" fill="currentColor" style="left:12px;top:8px"><rect x="0.0" y="0.0" width="3.400" height="3.400" rx=".3"/><rect x="4.4" y="0.0" width="3.400" height="3.400" rx=".3"/><rect x="8.8" y="0.0" width="3.400" height="3.400" rx=".3"/><rect x="0.0" y="4.3" width="3.400" height="3.400" rx=".3"/><rect x="4.4" y="4.3" width="3.400" height="3.400" rx=".3"/><rect x="8.8" y="4.3" width="3.400" height="3.400" rx=".3"/><rect x="0.0" y="8.6" width="3.400" height="3.400" rx=".3"/><rect x="4.4" y="8.6" width="3.400" height="3.400" rx=".3"/><rect x="8.8" y="8.6" width="3.400" height="3.400" rx=".3"/></svg><svg width="7" height="4" viewBox="0 0 7 4" fill="currentColor" style="left:27.800px;top:14px"><path d="M0 0H7L3.500 4Z"/></svg></span>
    <span class="gb" style="left:87px;width:51px"><svg width="13.2" height="13" viewBox="0 0 12 12.500" preserveAspectRatio="none" fill="currentColor" style="left:12px;top:7px"><path d="M0 9.300H12V12.500H0Z"/><path d="M5.500 0H12V6.500L9.800 4.300 6.600 7.500 4.500 5.400 7.700 2.200Z"/><path d="M1.500 8.300 3.500 6.300 5.700 8.300Z"/></svg><svg width="7" height="4" viewBox="0 0 7 4" fill="currentColor" style="left:28.800px;top:14px"><path d="M0 0H7L3.500 4Z"/></svg></span>
  </div>
  <div id="sbtn"><svg width="13.5" height="13.5" viewBox="0 0 13 13" fill="currentColor" style="position:absolute;left:11.500px;top:6.700px;color:#444"><path fill-rule="evenodd" d="M5.500 0A5.500 5.500 0 0 1 10 8.700L12.700 11.400c.4.400.4 1 0 1.300-.4.400-1 .4-1.300 0L8.700 10A5.500 5.500 0 1 1 5.500 0Z M5.500 1.900A3.600 3.600 0 1 0 5.500 9.100A3.600 3.600 0 1 0 5.500 1.900Z"/></svg></div>
  
<table id="tb">
<colgroup><col style="width:44px"><col style="width:95px"><col style="width:150px"><col style="width:111px"><col style="width:238px"><col style="width:157px"><col style="width:131px"><col style="width:283px"><col style="width:282px"><col style="width:139px"></colgroup>
<thead><tr><th><span class="cb"></span></th><th>Id</th><th>用户ID</th><th>产品ID</th><th>质押量</th><th>U价值</th><th>状态</th><th>购买时间</th><th>奖励发放时间</th><th>操作</th></tr></thead>
<tbody>
<tr class="odd"><td><span class="cb"></span></td><td>409</td><td>1000001</td><td>1</td><td>10.00000000</td><td>10.00</td><td><span class="st s0"><i></i>正常</span></td><td>2022-11-02 11:27:05</td><td>2022-11-02 11:27:05</td><td><span class="ob e"><svg width="11" height="11" viewBox="0 0 12 12" fill="currentColor" style="position:absolute;left:5.400px;top:5.500px"><path d="M0 12 .5 8.300 7.100 1.700 10.300 4.900 3.700 11.500Z"/><path d="M7.800 1 8.700.1c.4-.4 1-.4 1.400 0l1.800 1.800c.4.4.4 1 0 1.400l-.9.900Z"/></svg></span><span class="ob d"><svg width="10.300" height="11.200" viewBox="0 0 11 12" fill="currentColor" style="position:absolute;left:5.300px;top:4.900px"><path fill-rule="evenodd" d="M3.800 0.900 4.200.2C4.300.1 4.400 0 4.600 0H6.400c.2 0 .3.100.4.200l.4.700H10.200c.150 0 .3.100.3.300v.6c0 .2-.150.300-.3.300H9.800v8c0 1-.6 1.700-1.300 1.700H2.500c-.7 0-1.300-.7-1.300-1.700v-8H.8c-.150 0-.3-.1-.3-.300V1.200c0-.2.150-.300.3-.3Z M3 4v5.800c0 .150.1.250.250.250h.5c.150 0 .250-.1.250-.250V4c0-.150-.1-.250-.250-.250h-.5C3.100 3.750 3 3.850 3 4Z M5 4v5.800c0 .150.1.250.250.250h.5c.150 0 .250-.1.250-.250V4c0-.150-.1-.250-.250-.250h-.5C5.100 3.750 5 3.850 5 4Z M7 4v5.800c0 .150.1.250.250.250h.5C7.900 10.050 8 9.950 8 9.800V4c0-.150-.1-.250-.250-.250h-.5C7.100 3.750 7 3.850 7 4Z"/></svg></span></td></tr>
<tr class=""><td><span class="cb"></span></td><td>408</td><td>2076950</td><td>2</td><td>1000.00000000</td><td>999.80</td><td><span class="st s0"><i></i>正常</span></td><td>2022-07-17 22:45:39</td><td>2022-09-26 09:45:39</td><td><span class="ob e"><svg width="11" height="11" viewBox="0 0 12 12" fill="currentColor" style="position:absolute;left:5.400px;top:5.500px"><path d="M0 12 .5 8.300 7.100 1.700 10.300 4.900 3.700 11.500Z"/><path d="M7.800 1 8.700.1c.4-.4 1-.4 1.400 0l1.800 1.800c.4.4.4 1 0 1.400l-.9.900Z"/></svg></span><span class="ob d"><svg width="10.300" height="11.200" viewBox="0 0 11 12" fill="currentColor" style="position:absolute;left:5.300px;top:4.900px"><path fill-rule="evenodd" d="M3.800 0.900 4.200.2C4.300.1 4.400 0 4.600 0H6.400c.2 0 .3.100.4.200l.4.700H10.200c.150 0 .3.100.3.300v.6c0 .2-.150.300-.3.300H9.800v8c0 1-.6 1.700-1.300 1.700H2.500c-.7 0-1.300-.7-1.300-1.700v-8H.8c-.150 0-.3-.1-.3-.300V1.200c0-.2.150-.300.3-.3Z M3 4v5.800c0 .150.1.250.250.250h.5c.150 0 .250-.1.250-.250V4c0-.150-.1-.250-.250-.250h-.5C3.100 3.750 3 3.850 3 4Z M5 4v5.800c0 .150.1.250.250.250h.5c.150 0 .250-.1.250-.250V4c0-.150-.1-.250-.250-.250h-.5C5.100 3.750 5 3.850 5 4Z M7 4v5.800c0 .150.1.250.250.250h.5C7.900 10.050 8 9.950 8 9.800V4c0-.150-.1-.250-.250-.250h-.5C7.100 3.750 7 3.850 7 4Z"/></svg></span></td></tr>
<tr class="odd"><td><span class="cb"></span></td><td>407</td><td>2076950</td><td>2</td><td>100.00000000</td><td>99.95</td><td><span class="st s0"><i></i>正常</span></td><td>2022-07-16 00:06:05</td><td>2022-09-26 09:06:05</td><td><span class="ob e"><svg width="11" height="11" viewBox="0 0 12 12" fill="currentColor" style="position:absolute;left:5.400px;top:5.500px"><path d="M0 12 .5 8.300 7.100 1.700 10.300 4.900 3.700 11.500Z"/><path d="M7.800 1 8.700.1c.4-.4 1-.4 1.400 0l1.800 1.800c.4.4.4 1 0 1.400l-.9.900Z"/></svg></span><span class="ob d"><svg width="10.300" height="11.200" viewBox="0 0 11 12" fill="currentColor" style="position:absolute;left:5.300px;top:4.900px"><path fill-rule="evenodd" d="M3.800 0.900 4.200.2C4.300.1 4.400 0 4.600 0H6.400c.2 0 .3.100.4.200l.4.700H10.200c.150 0 .3.100.3.300v.6c0 .2-.150.300-.3.300H9.800v8c0 1-.6 1.700-1.300 1.700H2.500c-.7 0-1.300-.7-1.300-1.700v-8H.8c-.150 0-.3-.1-.3-.300V1.200c0-.2.150-.300.3-.3Z M3 4v5.800c0 .150.1.250.250.250h.5c.150 0 .250-.1.250-.250V4c0-.150-.1-.250-.250-.250h-.5C3.100 3.750 3 3.850 3 4Z M5 4v5.800c0 .150.1.250.250.250h.5c.150 0 .250-.1.250-.250V4c0-.150-.1-.250-.250-.250h-.5C5.100 3.750 5 3.850 5 4Z M7 4v5.800c0 .150.1.250.250.250h.5C7.900 10.050 8 9.950 8 9.800V4c0-.150-.1-.250-.250-.250h-.5C7.100 3.750 7 3.850 7 4Z"/></svg></span></td></tr>
<tr class="hov"><td><span class="cb"></span></td><td>406</td><td>2077027</td><td>1</td><td>10000.00000000</td><td>9994.00</td><td><span class="st s1"><i></i>出局</span></td><td>2022-06-26 19:39:31</td><td>2022-06-27 19:39:31</td><td><span class="ob e"><svg width="11" height="11" viewBox="0 0 12 12" fill="currentColor" style="position:absolute;left:5.400px;top:5.500px"><path d="M0 12 .5 8.300 7.100 1.700 10.300 4.900 3.700 11.500Z"/><path d="M7.800 1 8.700.1c.4-.4 1-.4 1.400 0l1.800 1.800c.4.4.4 1 0 1.400l-.9.900Z"/></svg></span><span class="ob d"><svg width="10.300" height="11.200" viewBox="0 0 11 12" fill="currentColor" style="position:absolute;left:5.300px;top:4.900px"><path fill-rule="evenodd" d="M3.800 0.900 4.200.2C4.300.1 4.400 0 4.600 0H6.400c.2 0 .3.100.4.200l.4.700H10.200c.150 0 .3.100.3.300v.6c0 .2-.150.300-.3.300H9.800v8c0 1-.6 1.700-1.300 1.700H2.500c-.7 0-1.300-.7-1.300-1.700v-8H.8c-.150 0-.3-.1-.3-.300V1.200c0-.2.150-.300.3-.3Z M3 4v5.800c0 .150.1.250.250.250h.5c.150 0 .250-.1.250-.250V4c0-.150-.1-.250-.250-.250h-.5C3.100 3.750 3 3.850 3 4Z M5 4v5.800c0 .150.1.250.250.250h.5c.150 0 .250-.1.250-.250V4c0-.150-.1-.250-.250-.250h-.5C5.100 3.750 5 3.850 5 4Z M7 4v5.800c0 .150.1.250.250.250h.5C7.900 10.050 8 9.950 8 9.800V4c0-.150-.1-.250-.250-.250h-.5C7.100 3.750 7 3.850 7 4Z"/></svg></span></td></tr>
<tr class="odd"><td><span class="cb"></span></td><td>405</td><td>2077026</td><td>1</td><td>10000.00000000</td><td>9994.00</td><td><span class="st s1"><i></i>出局</span></td><td>2022-06-26 19:38:51</td><td>2022-06-27 19:38:51</td><td><span class="ob e"><svg width="11" height="11" viewBox="0 0 12 12" fill="currentColor" style="position:absolute;left:5.400px;top:5.500px"><path d="M0 12 .5 8.300 7.100 1.700 10.300 4.900 3.700 11.500Z"/><path d="M7.800 1 8.700.1c.4-.4 1-.4 1.400 0l1.800 1.800c.4.4.4 1 0 1.400l-.9.900Z"/></svg></span><span class="ob d"><svg width="10.300" height="11.200" viewBox="0 0 11 12" fill="currentColor" style="position:absolute;left:5.300px;top:4.900px"><path fill-rule="evenodd" d="M3.800 0.900 4.200.2C4.300.1 4.400 0 4.600 0H6.400c.2 0 .3.100.4.200l.4.700H10.200c.150 0 .3.100.3.300v.6c0 .2-.150.300-.3.300H9.800v8c0 1-.6 1.700-1.300 1.700H2.500c-.7 0-1.300-.7-1.300-1.700v-8H.8c-.150 0-.3-.1-.3-.300V1.200c0-.2.150-.300.3-.3Z M3 4v5.800c0 .150.1.250.250.250h.5c.150 0 .250-.1.250-.250V4c0-.150-.1-.250-.250-.250h-.5C3.100 3.750 3 3.850 3 4Z M5 4v5.800c0 .150.1.250.250.250h.5c.150 0 .250-.1.250-.250V4c0-.150-.1-.250-.250-.250h-.5C5.100 3.750 5 3.850 5 4Z M7 4v5.800c0 .150.1.250.250.250h.5C7.900 10.050 8 9.950 8 9.800V4c0-.150-.1-.250-.250-.250h-.5C7.100 3.750 7 3.850 7 4Z"/></svg></span></td></tr>
<tr class=""><td><span class="cb"></span></td><td>404</td><td>2077025</td><td>1</td><td>10000.00000000</td><td>9994.00</td><td><span class="st s1"><i></i>出局</span></td><td>2022-06-26 19:38:09</td><td>2022-06-27 19:38:09</td><td><span class="ob e"><svg width="11" height="11" viewBox="0 0 12 12" fill="currentColor" style="position:absolute;left:5.400px;top:5.500px"><path d="M0 12 .5 8.300 7.100 1.700 10.300 4.900 3.700 11.500Z"/><path d="M7.800 1 8.700.1c.4-.4 1-.4 1.400 0l1.800 1.800c.4.4.4 1 0 1.400l-.9.900Z"/></svg></span><span class="ob d"><svg width="10.300" height="11.200" viewBox="0 0 11 12" fill="currentColor" style="position:absolute;left:5.300px;top:4.900px"><path fill-rule="evenodd" d="M3.800 0.900 4.200.2C4.300.1 4.400 0 4.600 0H6.400c.2 0 .3.100.4.200l.4.700H10.200c.150 0 .3.100.3.300v.6c0 .2-.150.300-.3.300H9.800v8c0 1-.6 1.700-1.300 1.700H2.500c-.7 0-1.300-.7-1.300-1.700v-8H.8c-.150 0-.3-.1-.3-.300V1.200c0-.2.150-.300.3-.3Z M3 4v5.800c0 .150.1.250.250.250h.5c.150 0 .250-.1.250-.250V4c0-.150-.1-.250-.250-.250h-.5C3.100 3.750 3 3.850 3 4Z M5 4v5.800c0 .150.1.250.250.250h.5c.150 0 .250-.1.250-.250V4c0-.150-.1-.250-.250-.250h-.5C5.100 3.750 5 3.850 5 4Z M7 4v5.800c0 .150.1.250.250.250h.5C7.900 10.050 8 9.950 8 9.800V4c0-.150-.1-.250-.250-.250h-.5C7.100 3.750 7 3.850 7 4Z"/></svg></span></td></tr>
<tr class="odd"><td><span class="cb"></span></td><td>403</td><td>2077024</td><td>3</td><td>10100.00000008</td><td>10092.93</td><td><span class="st s0"><i></i>正常</span></td><td>2022-06-26 03:24:36</td><td>2022-09-26 09:24:36</td><td><span class="ob e"><svg width="11" height="11" viewBox="0 0 12 12" fill="currentColor" style="position:absolute;left:5.400px;top:5.500px"><path d="M0 12 .5 8.300 7.100 1.700 10.300 4.900 3.700 11.500Z"/><path d="M7.800 1 8.700.1c.4-.4 1-.4 1.400 0l1.800 1.800c.4.4.4 1 0 1.400l-.9.900Z"/></svg></span><span class="ob d"><svg width="10.300" height="11.200" viewBox="0 0 11 12" fill="currentColor" style="position:absolute;left:5.300px;top:4.900px"><path fill-rule="evenodd" d="M3.800 0.900 4.200.2C4.300.1 4.400 0 4.600 0H6.400c.2 0 .3.100.4.200l.4.700H10.200c.150 0 .3.100.3.300v.6c0 .2-.150.300-.3.300H9.800v8c0 1-.6 1.700-1.300 1.700H2.500c-.7 0-1.300-.7-1.300-1.700v-8H.8c-.150 0-.3-.1-.3-.300V1.200c0-.2.150-.300.3-.3Z M3 4v5.800c0 .150.1.250.250.250h.5c.150 0 .250-.1.250-.250V4c0-.150-.1-.250-.250-.250h-.5C3.100 3.750 3 3.850 3 4Z M5 4v5.800c0 .150.1.250.250.250h.5c.150 0 .250-.1.250-.250V4c0-.150-.1-.250-.250-.250h-.5C5.100 3.750 5 3.850 5 4Z M7 4v5.800c0 .150.1.250.250.250h.5C7.900 10.050 8 9.950 8 9.800V4c0-.150-.1-.250-.250-.250h-.5C7.100 3.750 7 3.850 7 4Z"/></svg></span></td></tr>
<tr class=""><td><span class="cb"></span></td><td>402</td><td>2077023</td><td>3</td><td>10100.00000008</td><td>10092.93</td><td><span class="st s0"><i></i>正常</span></td><td>2022-06-26 03:24:06</td><td>2022-09-26 09:24:06</td><td><span class="ob e"><svg width="11" height="11" viewBox="0 0 12 12" fill="currentColor" style="position:absolute;left:5.400px;top:5.500px"><path d="M0 12 .5 8.300 7.100 1.700 10.300 4.900 3.700 11.500Z"/><path d="M7.800 1 8.700.1c.4-.4 1-.4 1.400 0l1.800 1.800c.4.4.4 1 0 1.400l-.9.900Z"/></svg></span><span class="ob d"><svg width="10.300" height="11.200" viewBox="0 0 11 12" fill="currentColor" style="position:absolute;left:5.300px;top:4.900px"><path fill-rule="evenodd" d="M3.800 0.900 4.200.2C4.300.1 4.400 0 4.600 0H6.400c.2 0 .3.100.4.200l.4.700H10.200c.150 0 .3.100.3.300v.6c0 .2-.150.300-.3.300H9.800v8c0 1-.6 1.700-1.300 1.700H2.500c-.7 0-1.300-.7-1.300-1.700v-8H.8c-.150 0-.3-.1-.3-.300V1.200c0-.2.150-.300.3-.3Z M3 4v5.800c0 .150.1.250.250.250h.5c.150 0 .250-.1.250-.250V4c0-.150-.1-.250-.250-.250h-.5C3.100 3.750 3 3.850 3 4Z M5 4v5.800c0 .150.1.250.250.250h.5c.150 0 .250-.1.250-.250V4c0-.150-.1-.250-.250-.250h-.5C5.100 3.750 5 3.850 5 4Z M7 4v5.800c0 .150.1.250.250.250h.5C7.900 10.050 8 9.950 8 9.800V4c0-.150-.1-.250-.250-.250h-.5C7.100 3.750 7 3.850 7 4Z"/></svg></span></td></tr>
<tr class="odd"><td><span class="cb"></span></td><td>401</td><td>2077022</td><td>3</td><td>10100.00000008</td><td>10092.93</td><td><span class="st s0"><i></i>正常</span></td><td>2022-06-26 03:23:40</td><td>2022-09-26 09:23:40</td><td><span class="ob e"><svg width="11" height="11" viewBox="0 0 12 12" fill="currentColor" style="position:absolute;left:5.400px;top:5.500px"><path d="M0 12 .5 8.300 7.100 1.700 10.300 4.900 3.700 11.500Z"/><path d="M7.800 1 8.700.1c.4-.4 1-.4 1.400 0l1.800 1.800c.4.4.4 1 0 1.400l-.9.900Z"/></svg></span><span class="ob d"><svg width="10.300" height="11.200" viewBox="0 0 11 12" fill="currentColor" style="position:absolute;left:5.300px;top:4.900px"><path fill-rule="evenodd" d="M3.800 0.900 4.200.2C4.300.1 4.400 0 4.600 0H6.400c.2 0 .3.100.4.200l.4.700H10.200c.150 0 .3.100.3.300v.6c0 .2-.150.300-.3.300H9.800v8c0 1-.6 1.700-1.300 1.700H2.500c-.7 0-1.300-.7-1.300-1.700v-8H.8c-.150 0-.3-.1-.3-.300V1.200c0-.2.150-.300.3-.3Z M3 4v5.800c0 .150.1.250.250.250h.5c.150 0 .250-.1.250-.250V4c0-.150-.1-.250-.250-.250h-.5C3.100 3.750 3 3.850 3 4Z M5 4v5.800c0 .150.1.250.250.250h.5c.150 0 .250-.1.250-.250V4c0-.150-.1-.250-.250-.250h-.5C5.100 3.750 5 3.850 5 4Z M7 4v5.800c0 .150.1.250.250.250h.5C7.900 10.050 8 9.950 8 9.800V4c0-.150-.1-.250-.250-.250h-.5C7.100 3.750 7 3.850 7 4Z"/></svg></span></td></tr>
<tr class=""><td><span class="cb"></span></td><td>400</td><td>2077021</td><td>3</td><td>10100.00000008</td><td>10092.93</td><td><span class="st s0"><i></i>正常</span></td><td>2022-06-26 03:23:12</td><td>2022-09-26 09:23:12</td><td><span class="ob e"><svg width="11" height="11" viewBox="0 0 12 12" fill="currentColor" style="position:absolute;left:5.400px;top:5.500px"><path d="M0 12 .5 8.300 7.100 1.700 10.300 4.900 3.700 11.500Z"/><path d="M7.800 1 8.700.1c.4-.4 1-.4 1.400 0l1.800 1.800c.4.4.4 1 0 1.400l-.9.900Z"/></svg></span><span class="ob d"><svg width="10.300" height="11.200" viewBox="0 0 11 12" fill="currentColor" style="position:absolute;left:5.300px;top:4.900px"><path fill-rule="evenodd" d="M3.800 0.900 4.200.2C4.300.1 4.400 0 4.600 0H6.400c.2 0 .3.100.4.200l.4.700H10.200c.150 0 .3.100.3.300v.6c0 .2-.150.300-.3.300H9.800v8c0 1-.6 1.700-1.300 1.700H2.500c-.7 0-1.300-.7-1.300-1.700v-8H.8c-.150 0-.3-.1-.3-.300V1.200c0-.2.150-.300.3-.3Z M3 4v5.800c0 .150.1.250.250.250h.5c.150 0 .250-.1.250-.250V4c0-.150-.1-.250-.250-.250h-.5C3.100 3.750 3 3.850 3 4Z M5 4v5.800c0 .150.1.250.250.250h.5c.150 0 .250-.1.250-.250V4c0-.150-.1-.250-.250-.250h-.5C5.100 3.750 5 3.850 5 4Z M7 4v5.800c0 .150.1.250.250.250h.5C7.900 10.050 8 9.950 8 9.800V4c0-.150-.1-.250-.250-.250h-.5C7.100 3.750 7 3.850 7 4Z"/></svg></span></td></tr>
</tbody>
</table>

  <div id="pinfo">显示第 1 到第 10 条记录，总共 392 条记录 每页显示 <span id="psel">10<svg width="7" height="4" viewBox="0 0 7 4" fill="currentColor" style="position:absolute;left:30px;top:14.500px;color:#444"><path d="M0 4H7L3.500 0Z"/></svg></span> 条记录</div>
  <div id="pager">
    <span class="pg first" style="left:1157px;width:67px">上一页</span><span class="pg on" style="left:1224px;width:34px">1</span><span class="pg " style="left:1258px;width:32px">2</span><span class="pg " style="left:1290px;width:33px">3</span><span class="pg " style="left:1323px;width:33px">4</span><span class="pg " style="left:1356px;width:33px">5</span><span class="pg dis" style="left:1389px;width:36px">...</span><span class="pg " style="left:1425px;width:41px">40</span><span class="pg last" style="left:1466px;width:67px">下一页</span>
    <span id="jin"></span><span id="jbtn">跳转</span>
  </div>
</div>

</body>
</html>
